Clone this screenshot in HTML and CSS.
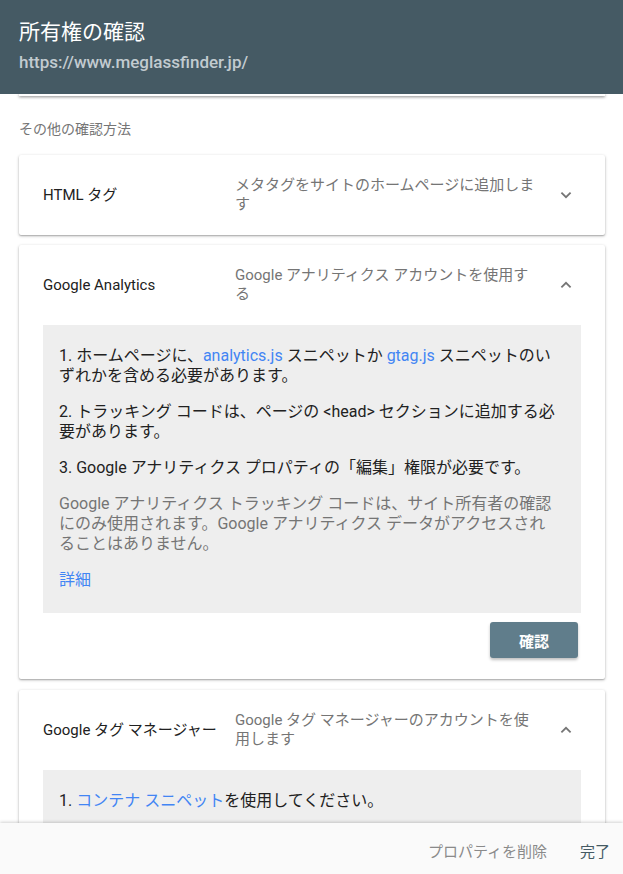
FILE: index.html
```html
<!DOCTYPE html>
<html lang="ja">
<head>
  <meta charset="utf-8">
  <title>所有権の確認</title>
  <link rel="stylesheet" href="styles.css">
</head>
<body>
  <div class="dialog">
    <!-- top bar -->
    <div class="topbar">
      <div class="title">所有権の確認</div>
      <div class="site">https://www.meglassfinder.jp/</div>
    </div>

    <div class="content">
      <!-- bottom of the card that has scrolled up under the bar -->
      <div class="card-tail"></div>

      <div class="section-label">その他の確認方法</div>

      <div class="card">
        <div class="card-head">
          <div class="method">HTML タグ</div>
          <div class="desc">メタタグをサイトのホームページに追加します</div>
          <svg class="chevron" viewBox="0 0 24 24"><path d="M7.4 9.6 12 14.2l4.6-4.6"/></svg>
        </div>
      </div>

      <div class="card">
        <div class="card-head">
          <div class="method">Google Analytics</div>
          <div class="desc">Google アナリティクス アカウントを使用する</div>
          <svg class="chevron" viewBox="0 0 24 24"><path d="M7.4 14.4 12 9.8l4.6 4.6"/></svg>
        </div>
        <div class="steps">
          <p>1. ホームページに、<a href="#">analytics.js</a> スニペットか <a href="#">gtag.js</a> スニペットのいずれかを含める必要があります。</p>
          <p>2. トラッキング コードは、ページの &lt;head&gt; セクションに追加する必要があります。</p>
          <p>3. Google アナリティクス プロパティの「編集」権限が必要です。</p>
          <p class="note">Google アナリティクス トラッキング コードは、サイト所有者の確認にのみ使用されます。Google アナリティクス データがアクセスされることはありません。</p>
          <p><a href="#">詳細</a></p>
        </div>
        <div class="actions">
          <button class="btn">確認</button>
        </div>
      </div>

      <div class="card card-gtm">
        <div class="card-head">
          <div class="method">Google タグ マネージャー</div>
          <div class="desc">Google タグ マネージャーのアカウントを使用します</div>
          <svg class="chevron" viewBox="0 0 24 24"><path d="M7.4 14.4 12 9.8l4.6 4.6"/></svg>
        </div>
        <div class="steps steps-long">
          <p>1. <a href="#">コンテナ スニペット</a>を使用してください。</p>
        </div>
      </div>
    </div>

    <div class="footer">
      <span class="link-btn muted">プロパティを削除</span>
      <span class="link-btn">完了</span>
    </div>
  </div>
</body>
</html>
```

FILE: styles.css
```css
* { box-sizing: border-box; }
html, body { margin: 0; height: 100%; }
body {
  font-family: Roboto, "Noto Sans CJK JP", sans-serif;
  color: #212121;
  background: #fff;
}
.dialog {
  height: 874px;
  display: flex;
  flex-direction: column;
  overflow: hidden;
}

.topbar {
  flex: none;
  height: 94px;
  background-color: #455a64;
  padding: 17px 19px 0;
  position: relative;
  z-index: 2;
}
.title {
  color: #fff;
  font-size: 21px;
  line-height: 30px;
}
.site {
  color: #c2cbd0;
  font-size: 17px;
  font-weight: 500;
  line-height: 22px;
  margin-top: 4px;
}

.content {
  flex: 1;
  overflow: hidden;
  padding: 0 18px 0 19px;
}
.card-tail {
  height: 2px;
  background: #fff;
  box-shadow: 0 1px 3px rgba(0,0,0,.55);
}
.section-label {
  font-size: 14px;
  color: #757575;
  line-height: 20px;
  margin: 23px 0 0;
}

.card {
  background: #fff;
  border-radius: 2px;
  box-shadow: 0 1px 3px rgba(0,0,0,.3), 0 1px 1px rgba(0,0,0,.12);
  margin-top: 10px;
}
.section-label + .card { margin-top: 16px; }
.card-gtm { margin-top: 11px; }

.card-head {
  height: 80px;
  display: grid;
  grid-template-columns: 192px 1fr 24px;
  align-items: center;
  padding: 0 27px 0 24px;
}
.method {
  font-size: 15px;
  line-height: 20px;
}
.desc {
  font-size: 15px;
  line-height: 19px;
  color: #757575;
  margin-right: 12px;
}
.chevron {
  width: 24px;
  height: 24px;
  fill: none;
  stroke: #757575;
  stroke-width: 1.8;
}

.steps {
  margin: 0 24px;
  background: #eeeeee;
  padding: 21px 25px 23px 16px;
  font-size: 16px;
  line-height: 20px;
}
.steps p { margin: 0 0 16px; }
.steps p:last-child { margin-bottom: 0; }
.steps .note { color: #757575; }
.steps a { color: #4285f4; text-decoration: none; }
.steps-long { padding-bottom: 60px; }

.actions {
  display: flex;
  justify-content: flex-end;
  padding: 9px 27px 21px 0;
}
.btn {
  width: 88px;
  height: 36px;
  border: none;
  border-radius: 3px;
  background: #607d8b;
  color: #fff;
  font-family: Roboto, "Noto Sans CJK JP", sans-serif;
  font-size: 15px;
  font-weight: 700;
  box-shadow: 0 2px 3px rgba(0,0,0,.25);
}

.footer {
  flex: none;
  height: 51px;
  background: #fafafa;
  box-shadow: 0 -1px 3px rgba(0,0,0,.18);
  display: flex;
  align-items: center;
  justify-content: flex-end;
  gap: 33px;
  padding: 3px 13px 0 0;
  position: relative;
  z-index: 2;
}
.link-btn {
  font-size: 15px;
  color: #455a64;
}
.link-btn.muted { color: #8a8a8a; }
```
